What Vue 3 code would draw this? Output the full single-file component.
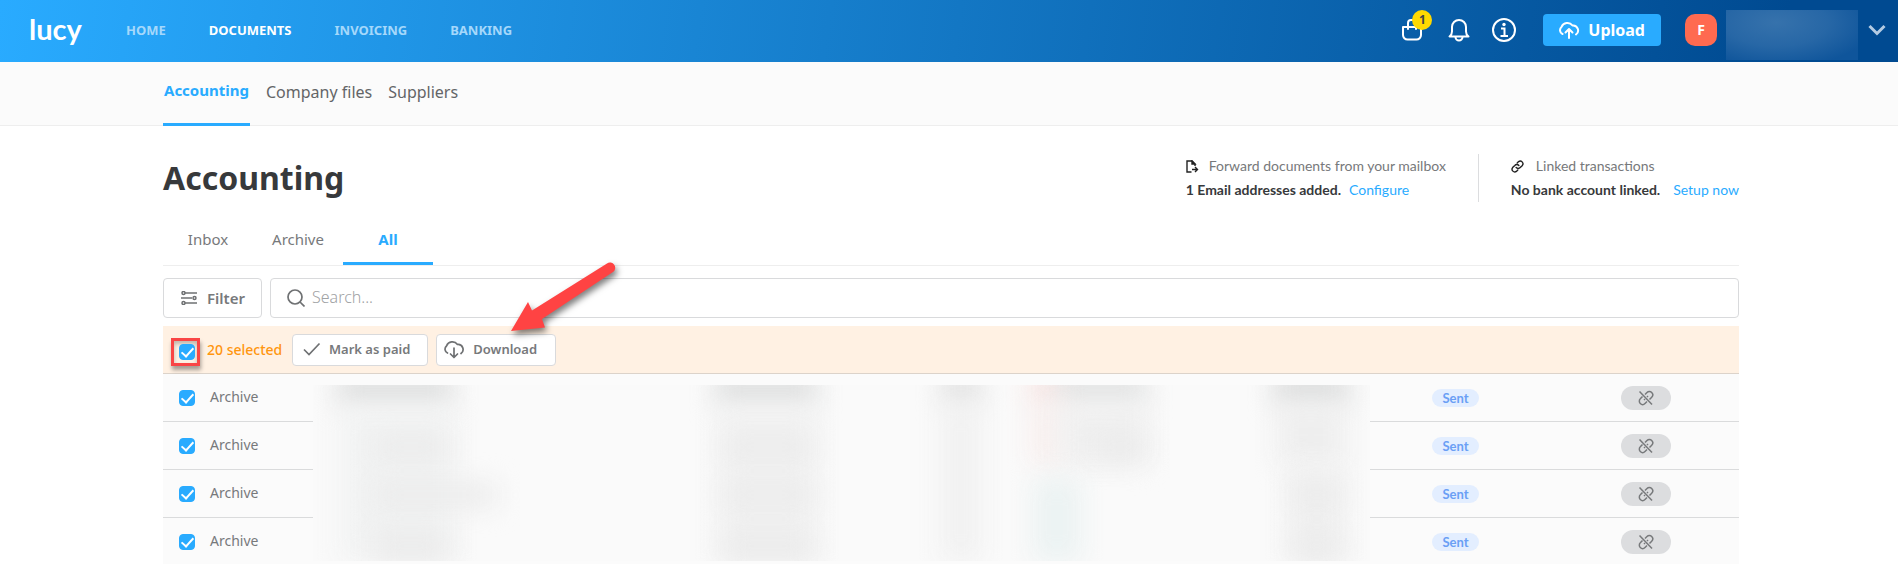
<script setup>
import { ref } from 'vue'

const nav = ['Home', 'Documents', 'Invoicing', 'Banking']
const sections = ['Accounting', 'Company files', 'Suppliers']
const tabs = ['Inbox', 'Archive', 'All']
const query = ref('')
const allSelected = ref(true)
const rows = ref([1, 2, 3, 4].map((id) => ({ id, folder: 'Archive', status: 'Sent', selected: true })))

const smudges = [
  { x: 24, y: -12, w: 116, h: 34, c: '#dfe0e0' },
  { x: 26, y: 22, w: 116, h: 154, c: '#f2f3f3' },
  { x: 60, y: 50, w: 76, h: 24, c: '#ebebeb' },
  { x: 60, y: 98, w: 124, h: 24, c: '#ebebeb' },
  { x: 60, y: 146, w: 76, h: 30, c: '#ebebeb' },
  { x: 402, y: -12, w: 102, h: 34, c: '#dfe0e0' },
  { x: 404, y: 22, w: 100, h: 154, c: '#f2f2f2' },
  { x: 410, y: 50, w: 90, h: 24, c: '#ebebeb' },
  { x: 410, y: 98, w: 90, h: 24, c: '#ebebeb' },
  { x: 410, y: 146, w: 90, h: 30, c: '#ebebeb' },
  { x: 628, y: -12, w: 40, h: 32, c: '#e2e2e2' },
  { x: 628, y: 20, w: 40, h: 156, c: '#f1f1f1' },
  { x: 716, y: -12, w: 38, h: 32, c: '#f8e6e4' },
  { x: 744, y: -12, w: 90, h: 32, c: '#e2e3e3' },
  { x: 716, y: 20, w: 38, h: 60, c: '#f9f0ef' },
  { x: 744, y: 20, w: 90, h: 60, c: '#f0f0f0' },
  { x: 780, y: 50, w: 54, h: 24, c: '#ebebeb' },
  { x: 720, y: 94, w: 48, h: 82, c: '#ebf2f2' },
  { x: 960, y: -12, w: 76, h: 32, c: '#dcdddd' },
  { x: 964, y: 20, w: 68, h: 60, c: '#eeeeee' },
  { x: 974, y: 80, w: 58, h: 96, c: '#f1f1f1' },
  { x: 980, y: 98, w: 48, h: 24, c: '#ebebeb' },
  { x: 980, y: 146, w: 48, h: 30, c: '#ebebeb' },
]
const place = (s) => ({
  left: s.x + 'px',
  top: s.y + 'px',
  width: s.w + 'px',
  height: s.h + 'px',
  background: s.c,
})
</script>

<template>
  <div class="page">
    <header class="topbar">
      <a class="logo" href="#">lucy</a>
      <nav class="nav" aria-label="Main">
        <a v-for="n in nav" :key="n" href="#" :class="{ on: n === 'Documents' }">{{ n.toUpperCase() }}</a>
      </nav>
      <div class="tools">
        <button class="icon-btn cart" aria-label="Cart">
          <svg width="22" height="22" viewBox="0 0 22 22" fill="none" stroke="#fff" stroke-width="2" stroke-linecap="round" stroke-linejoin="round">
            <path d="M2 8h18v8a4.500 4.500 0 0 1-4.500 4.500h-9A4.500 4.500 0 0 1 2 16z" />
            <path d="M7 10V4a3 3 0 0 1 3-3h2a3 3 0 0 1 3 3v6" />
          </svg>
          <span class="count">1</span>
        </button>
        <button class="icon-btn" aria-label="Notifications">
          <svg width="22" height="24" viewBox="0 0 22 24" fill="none" stroke="#fff" stroke-width="2" stroke-linecap="round" stroke-linejoin="round">
            <path d="M1.500 18.500h19c-2-1.500-2.500-3-2.500-5V9A7 7 0 0 0 4 9v4.500c0 2-.5 3.500-2.500 5z" />
            <path d="M7.500 19a3.500 3.500 0 0 0 7 0" />
          </svg>
        </button>
        <button class="icon-btn" aria-label="Information">
          <svg width="24" height="24" viewBox="0 0 24 24" fill="none" stroke="#fff" stroke-width="2">
            <circle cx="12" cy="12" r="11" />
            <path d="M9 10.500h3.500V18M8.500 18h7.500" />
            <circle cx="12" cy="6.500" r="1.700" fill="#fff" stroke="none" />
          </svg>
        </button>
        <button class="upload">
          <svg width="22" height="20" viewBox="0 0 22 20" fill="none" stroke="#fff" stroke-width="2" stroke-linecap="round" stroke-linejoin="round">
            <path d="M4.500 14A4.200 4.200 0 0 1 3.500 7 6.300 6.300 0 0 1 14.500 5.500a5 5 0 0 1 3.500 9" />
            <path d="M11 18V9.500M7.500 12.500 11 9l3.500 3.500" />
          </svg>
          Upload
        </button>
        <span class="avatar">F</span>
        <span class="account"></span>
        <button class="icon-btn more" aria-label="Account menu">
          <svg width="18" height="12" viewBox="0 0 18 12" fill="none" stroke="#b3cbe3" stroke-width="3">
            <path d="M1.500 2 9 9.500 16.500 2" />
          </svg>
        </button>
      </div>
    </header>

    <nav class="subnav" aria-label="Documents">
      <a v-for="s in sections" :key="s" href="#" :class="{ on: s === 'Accounting' }">{{ s }}</a>
    </nav>

    <main class="content">
      <div class="heading">
        <h1>Accounting</h1>
        <div class="facts">
          <section class="fact">
            <p class="fact-title">
              <svg width="13" height="13" viewBox="0 0 13 13" fill="none" stroke="#222" stroke-width="1.400">
                <path d="M5.500 12H1V1h5l3 3v2" />
                <path d="M6 1v3h3z" fill="#222" />
                <path d="M6 9.500h5M9 7l2.500 2.500L9 12" />
              </svg>
              Forward documents from your mailbox
            </p>
            <p class="fact-body"><b>1 Email addresses added.</b><a href="#">Configure</a></p>
          </section>
          <section class="fact">
            <p class="fact-title linked">
              <svg width="13" height="13" viewBox="0 0 24 24" fill="none" stroke="#222" stroke-width="2.600" stroke-linecap="round">
                <path d="M9.500 14a5 5 0 0 0 7.500 0l4-4A5 5 0 0 0 14 3l-2.500 2.500" />
                <path d="M14.500 10a5 5 0 0 0-7.500 0l-4 4A5 5 0 0 0 10 21l2.500-2.500" />
              </svg>
              Linked transactions
            </p>
            <p class="fact-body wide"><b>No bank account linked.</b><a href="#">Setup now</a></p>
          </section>
        </div>
      </div>

      <div class="tabs">
        <button v-for="t in tabs" :key="t" :class="{ on: t === 'All' }">{{ t }}</button>
      </div>

      <div class="finder">
        <button class="filter">
          <svg width="16" height="14" viewBox="0 0 16 14" fill="none" stroke="#6f7173" stroke-width="1.500">
            <path d="M4 2h12M0 7h11M4 12h12" />
            <circle cx="2.500" cy="2" r="1.500" /><circle cx="13.500" cy="7" r="1.500" /><circle cx="2.500" cy="12" r="1.500" />
          </svg>
          Filter
        </button>
        <label class="search">
          <svg width="18" height="18" viewBox="0 0 18 18" fill="none" stroke="#6f7173" stroke-width="1.700">
            <circle cx="8" cy="8" r="7" /><path d="m13 13 4.500 4.500" />
          </svg>
          <input v-model="query" type="text" placeholder="Search..." aria-label="Search" />
        </label>
      </div>

      <div class="bulk">
        <label class="bulk-pick">
          <span class="marker"><input v-model="allSelected" type="checkbox" class="check" aria-label="Select all" /></span>
          <span>20 selected</span>
        </label>
        <button>
          <svg width="18" height="14" viewBox="0 0 18 14" fill="none" stroke="#6f7173" stroke-width="1.700">
            <path d="m1 7.500 5 5L16.500 1.500" />
          </svg>
          Mark as paid
        </button>
        <button class="download">
          <svg width="22" height="20" viewBox="0 0 22 20" fill="none" stroke="#6f7173" stroke-width="1.700" stroke-linecap="round" stroke-linejoin="round">
            <path d="M4.500 14A4.200 4.200 0 0 1 3.500 7 6.300 6.300 0 0 1 14.500 5.500a5 5 0 0 1 3.500 9" />
            <path d="M11 9v9M7.500 15l3.500 3.500 3.500-3.500" />
          </svg>
          Download
        </button>
        <svg class="arrow" width="130" height="90" viewBox="0 0 130 90" aria-hidden="true">
          <path d="M14 76 31 47 35 55.500 110 8.500A5 5 0 0 1 116 17L45 64 48 72.500Z" fill="#ff4343" />
        </svg>
      </div>

      <div class="list">
        <table>
          <tbody>
            <tr v-for="r in rows" :key="r.id">
              <td class="pick"><input v-model="r.selected" type="checkbox" class="check" aria-label="Select document" /></td>
              <td class="folder">{{ r.folder }}</td>
              <td></td>
              <td class="state"><span class="pill">{{ r.status }}</span></td>
              <td class="link">
                <button class="unlink" aria-label="Not linked">
                  <svg width="16" height="16" viewBox="0 0 16 16" fill="none" stroke="#77797b" stroke-width="1.500">
                    <path d="M1.500 1.500 14 14.500" />
                    <path d="M7 4.500 9 2.500a3.300 3.300 0 0 1 4.700 4.700L11.500 9.500" />
                    <path d="M4.500 6.500 2.300 8.800A3.300 3.300 0 0 0 7 13.500l2-2" />
                    <path d="m9 7 1-1M6 10l1-1" />
                  </svg>
                </button>
              </td>
            </tr>
          </tbody>
        </table>
        <div class="redacted" aria-hidden="true">
          <i v-for="(s, i) in smudges" :key="i" :style="place(s)"></i>
        </div>
      </div>
    </main>
  </div>
</template>

<style>
body {
  margin: 0;
  background: #fff;
  overflow: hidden;
}
</style>

<style scoped>
.page {
  font-family: "Noto Sans", "Open Sans", sans-serif;
  font-size: 14px;
  line-height: 20px;
  color: #77797b;
}
.page * {
  box-sizing: border-box;
}
a {
  text-decoration: none;
  color: #29abff;
}
button {
  font: inherit;
  color: inherit;
  background: none;
  border: 0;
  padding: 0;
  cursor: pointer;
}
svg {
  display: block;
  flex: none;
}
.topbar {
  display: flex;
  align-items: center;
  height: 62px;
  padding: 0 12px 2px 29px;
  background: linear-gradient(98deg, #29abff 0%, #004a91 94%);
}
.logo {
  width: 97px;
  padding-bottom: 2px;
  font-family: Lato, sans-serif;
  font-size: 29px;
  line-height: 32px;
  font-weight: 700;
  color: #fff;
}
.nav {
  display: flex;
  gap: 43px;
  font-size: 13px;
  font-weight: 700;
}
.nav a {
  color: #a5d8fb;
}
.nav a.on {
  color: #fff;
}
.tools {
  display: flex;
  align-items: center;
  align-self: stretch;
  margin-left: auto;
}
.icon-btn {
  position: relative;
  margin-right: 22px;
}
.cart {
  margin-right: 25px;
}
.count {
  position: absolute;
  top: -9px;
  left: 11px;
  width: 20px;
  height: 20px;
  border-radius: 10px;
  background: #ffd900;
  color: #444;
  font-size: 12px;
  line-height: 19px;
  font-weight: 700;
  text-align: center;
}
.upload {
  display: flex;
  align-items: center;
  gap: 8px;
  height: 32px;
  margin-left: 5px;
  padding: 0 16px 1px 15px;
  border-radius: 4px;
  background: #29abff;
  color: #fff;
  font-size: 16px;
  font-weight: 700;
}
.avatar {
  width: 32px;
  margin-left: 24px;
  border-radius: 10px;
  background: #ff6a50;
  color: #fff;
  font-weight: 700;
  line-height: 32px;
  text-align: center;
}
.account {
  align-self: flex-end;
  width: 132px;
  height: 50px;
  margin: 0 10px 0 9px;
  background: radial-gradient(ellipse at 38% 25%, #3672ac 0%, #2767a6 45%, #0f559b 85%);
}
.more {
  margin-right: 0;
}
.subnav {
  display: flex;
  align-items: stretch;
  gap: 16px;
  height: 64px;
  padding: 0 159px 0 163px;
  background: #fbfbfb;
  border-bottom: 1px solid #eee;
  font-size: 16px;
}
.subnav a {
  padding-top: 20px;
  color: #636567;
}
.subnav a.on {
  margin-bottom: -1px;
  padding: 18px 1px 0;
  color: #29abff;
  font-size: 15px;
  font-weight: 700;
  border-bottom: 3px solid #29abff;
}
.content {
  padding: 28px 159px 0 163px;
}
.heading {
  display: flex;
  justify-content: space-between;
}
h1 {
  margin: 0;
  font-size: 32px;
  line-height: 48px;
  font-weight: 700;
  color: #37393b;
}
.facts {
  display: flex;
  height: 48px;
  font-family: Lato, sans-serif;
}
.fact + .fact {
  margin-left: 32px;
  padding-left: 32px;
  border-left: 1px solid #dcdddf;
}
.fact p {
  margin: 0;
}
.fact-title {
  display: flex;
  align-items: center;
  gap: 10px;
  height: 24px;
}
.fact-title.linked {
  gap: 12px;
}
.fact-body {
  display: flex;
  gap: 8px;
  height: 24px;
  line-height: 24px;
}
.fact-body b {
  color: #37393b;
}
.fact-body.wide {
  gap: 13px;
}
.tabs {
  display: flex;
  margin-top: 14px;
  border-bottom: 1px solid #eee;
  font-size: 15px;
}
.tabs button {
  width: 90px;
  height: 49px;
  border-bottom: 3px solid transparent;
}
.tabs .on {
  color: #29abff;
  font-weight: 700;
  border-bottom-color: #29abff;
}
.finder {
  display: flex;
  gap: 8px;
  margin-top: 12px;
}
.filter,
.search {
  display: flex;
  align-items: center;
  height: 40px;
  border: 1px solid #d9dadc;
  border-radius: 4px;
}
.filter {
  width: 99px;
  padding: 0 0 1px 17px;
  gap: 10px;
  font-size: 15px;
  font-weight: 600;
}
.search {
  flex: 1;
  padding: 0 16px;
  gap: 7px;
}
.search input {
  flex: 1;
  border: 0;
  outline: 0;
  padding: 0 0 2px;
  background: none;
  font: inherit;
  font-size: 16px;
  font-weight: 300;
  color: #444;
}
.search input::placeholder {
  color: #a0a2a4;
}
.bulk {
  position: relative;
  display: flex;
  align-items: center;
  gap: 8px;
  height: 48px;
  margin-top: 8px;
  padding-left: 8px;
  background: #fff1e3;
  border-bottom: 1px solid #dcd3ca;
}
.bulk-pick {
  display: flex;
  align-items: center;
  gap: 7px;
  width: 113px;
  color: #ff960f;
  font-weight: 500;
  white-space: nowrap;
}
.marker {
  display: flex;
  justify-content: flex-end;
  align-items: center;
  width: 29px;
  height: 28px;
  margin-top: 4px;
  padding: 0 2px 0 0;
  border: 3px solid #f94545;
  box-shadow: 1px 4px 4px rgba(0, 0, 0, 0.35), inset 0 3px 4px rgba(0, 0, 0, 0.25);
}
.bulk button {
  display: flex;
  align-items: center;
  gap: 8px;
  height: 32px;
  padding: 0 17px 1px 10px;
  border: 1px solid #d9dadc;
  border-radius: 4px;
  background: #fff;
  font-size: 13px;
  font-weight: 600;
}
.bulk .download {
  padding: 0 18px 1px 6px;
}
.arrow {
  position: absolute;
  left: 334px;
  top: -71px;
  filter: drop-shadow(2px 4px 3px rgba(0, 0, 0, 0.5));
}
.check {
  appearance: none;
  display: block;
  flex: none;
  width: 16px;
  height: 16px;
  margin: 0;
  border: 1px solid #d9dadc;
  border-radius: 4px;
  background: #fff;
}
.check:checked {
  border-color: #29abff;
  background: #29abff;
}
.check:checked::after {
  content: "";
  display: block;
  width: 5px;
  height: 10px;
  margin: 0 0 0 4px;
  border: solid #fff;
  border-width: 0 2px 2px 0;
  transform: rotate(42deg);
}
.list {
  position: relative;
}
table {
  width: 100%;
  border-collapse: separate;
  border-spacing: 0;
  table-layout: fixed;
  background: #fbfbfb;
}
td {
  height: 48px;
  padding: 0;
  border-bottom: 1px solid #dadbdc;
}
.pick {
  width: 47px;
  padding-left: 16px;
}
.folder {
  width: 103px;
  padding-bottom: 2px;
}
.state {
  width: 189px;
}
.link {
  width: 118px;
}
.pill {
  display: block;
  width: 47px;
  border-radius: 9px;
  background: #e3eeff;
  color: #6a9ff5;
  font-family: Lato, sans-serif;
  font-size: 13px;
  line-height: 18px;
  font-weight: 700;
  text-align: center;
}
.unlink {
  display: flex;
  align-items: center;
  justify-content: center;
  width: 50px;
  height: 24px;
  border-radius: 12px;
  background: #dcdddf;
}
.redacted {
  position: absolute;
  top: 11px;
  left: 150px;
  right: 369px;
  height: 176px;
  overflow: hidden;
  background: #fafafa;
}
.redacted i {
  position: absolute;
  filter: blur(13px);
}
</style>
